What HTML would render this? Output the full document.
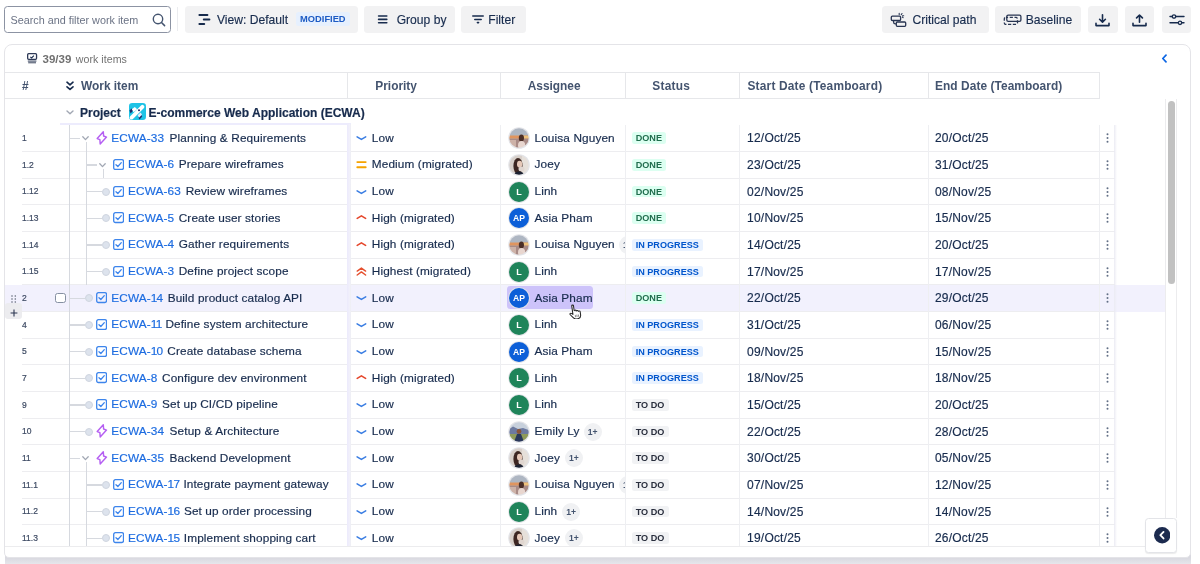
<!DOCTYPE html>
<html><head><meta charset="utf-8"><style>
*{box-sizing:border-box}
html,body{margin:0;padding:0}
body{width:1200px;height:564px;overflow:hidden;background:#fff;position:relative;font-family:"Liberation Sans",sans-serif;color:#172b4d}
.a{position:absolute}
.btn{position:absolute;top:6px;height:26.6px;background:#f2f2f3;border-radius:3.5px}
.btn .t{position:absolute;top:0.9px;line-height:26.6px;font-size:12.1px;color:#172b4d;white-space:nowrap;-webkit-text-stroke:0.15px currentColor}
.hd{position:absolute;top:73.0px;height:26px;line-height:26px;font-size:11.9px;font-weight:bold;color:#44546f;white-space:nowrap}
.vl{position:absolute;width:1px;background:#e6e7ea}
.hl{position:absolute;height:1px;background:#ededf0}
.row{position:absolute;left:0;width:1200px;height:26.667px}
.t12{position:absolute;font-size:11.8px;line-height:14px;white-space:nowrap;letter-spacing:0.12px;-webkit-text-stroke:0.18px currentColor}
.num{position:absolute;left:22px;font-size:8.5px;color:#3d4a63;line-height:10px;-webkit-text-stroke:0.2px currentColor}
.id{color:#1d6ce0}
.ic{position:absolute;display:block}
.av{position:absolute;width:21px;height:21px;border-radius:50%;border:1.5px solid #e2e3e7;color:#fff;font-weight:bold;font-size:8px;text-align:center;line-height:18px;overflow:hidden}
.loz{position:absolute;left:632px;height:11.6px;line-height:13.3px;padding:0 4.3px 0 3.7px;border-radius:2.5px;font-size:9.1px;font-weight:bold;white-space:nowrap}
.done{background:#dcfff1;color:#216e4e}
.inp{background:#e9f2ff;color:#0055cc}
.todo{background:#f1f2f4;color:#292e3d}
.dots{position:absolute;left:1106px;width:2px}
.dots i{display:block;width:2.2px;height:2.2px;border-radius:50%;background:#6b6e76;margin-bottom:1.8px}
.badge{position:absolute;width:18px;height:18px;border-radius:50%;background:#f0f1f3;font-size:8.6px;font-weight:bold;color:#44546f;text-align:center;line-height:18px}
.tv{position:absolute;width:1.1px;background:#d6d9df}
.th{position:absolute;height:1.1px;background:#d6d9df}
.dot{position:absolute;width:8.2px;height:8.2px;border-radius:50%;background:#dde3ed;border:0.8px solid #cfd5df}
.chev{position:absolute}
</style></head><body><div style="position:absolute;left:0;top:0;width:1200px;height:564px;overflow:hidden;will-change:transform">


<div class="a" style="left:4.2px;top:6px;width:167px;height:26.6px;border:1px solid #8c93a3;border-radius:3.5px"></div>
<div class="a" style="left:10.5px;top:6.5px;line-height:26.6px;font-size:10.8px;color:#6b7385;white-space:nowrap">Search and filter work item</div>
<svg class="a" style="left:151.5px;top:12.5px" width="14" height="14" viewBox="0 0 14 14"><circle cx="6" cy="6" r="4.7" fill="none" stroke="#44546f" stroke-width="1.4"/><path d="M9.5 9.5 L12.6 12.6" stroke="#44546f" stroke-width="1.5" stroke-linecap="round"/></svg>
<div class="a" style="left:177px;top:7px;width:1px;height:24px;background:#ebecef"></div>

<div class="btn" style="left:185px;width:173px">
  <svg class="a" style="left:11.5px;top:7.8px" width="14" height="12" viewBox="0 0 14 12"><path d="M2.4 1 H10.4 M6.8 5.6 H12.4 M2.4 10.1 H7.2" stroke="#172b4d" stroke-width="2" stroke-linecap="round"/></svg>
  <div class="t" style="left:32px">View: Default</div>
  <div class="a" style="left:111px;top:6px;height:14px;width:53.7px;background:#e6f0fe;border-radius:2.5px;font-size:9.3px;font-weight:bold;color:#1d5bc4;line-height:14.2px;text-align:center">MODIFIED</div>
</div>
<div class="btn" style="left:364px;width:90.7px">
  <svg class="a" style="left:13px;top:8px" width="12" height="11" viewBox="0 0 12 11"><path d="M1.6 2 H9.8 M1.6 5.4 H9.8 M1.6 8.7 H9.8" stroke="#172b4d" stroke-width="1.6" stroke-linecap="round"/></svg>
  <div class="t" style="left:32.7px">Group by</div>
</div>
<div class="btn" style="left:461.3px;width:64.5px">
  <svg class="a" style="left:10.8px;top:9px" width="12" height="10" viewBox="0 0 12 10"><path d="M0.8 1 H11.2 M2.8 4.4 H9.2 M5.4 7.6 H6.6" stroke="#172b4d" stroke-width="1.55" stroke-linecap="round"/></svg>
  <div class="t" style="left:27px">Filter</div>
</div>

<div class="btn" style="left:882px;width:106.7px">
  <svg class="a" style="left:8px;top:6px" width="17" height="16" viewBox="0 0 17 16"><rect x="1.3" y="4.2" width="9.3" height="4.3" rx="1" fill="none" stroke="#283552" stroke-width="1.3"/><rect x="6.3" y="10" width="9.4" height="4.3" rx="1" fill="none" stroke="#283552" stroke-width="1.3"/><path d="M3.6 8.6 V10 Q3.6 11.9 5.6 11.9 H6.3" fill="none" stroke="#283552" stroke-width="1.2"/><path d="M9.2 1.4 V2.6 M12 1.5 L11.2 2.7 M13.7 3.7 H12.5 M13.1 5.7 L12.3 5" stroke="#283552" stroke-width="1.1" stroke-linecap="round"/></svg>
  <div class="t" style="left:30.5px">Critical path</div>
</div>
<div class="btn" style="left:995.2px;width:85.6px">
  <svg class="a" style="left:7.8px;top:7px" width="20" height="13" viewBox="0 0 20 13"><rect x="3.8" y="2.2" width="14.1" height="6.25" rx="1.4" fill="none" stroke="#283552" stroke-width="1.3"/><rect x="1.3" y="4.4" width="13.2" height="7" rx="1.6" fill="none" stroke="#283552" stroke-width="1.3" stroke-dasharray="3.2 1.6" stroke-dashoffset="1"/></svg>
  <div class="t" style="left:30.6px">Baseline</div>
</div>
<div class="btn" style="left:1088.2px;width:29.5px">
  <svg class="a" style="left:7.3px;top:8.4px" width="15" height="13" viewBox="0 0 15 13"><path d="M7.5 0.8 V8 M4.6 5.3 L7.5 8.2 L10.4 5.3" fill="none" stroke="#172b4d" stroke-width="1.6" stroke-linecap="round" stroke-linejoin="round"/><path d="M1 9.2 V11.6 H14 V9.2" fill="none" stroke="#172b4d" stroke-width="1.6" stroke-linecap="round" stroke-linejoin="round"/></svg>
</div>
<div class="btn" style="left:1125.3px;width:29.2px">
  <svg class="a" style="left:7.1px;top:8.2px" width="15" height="13" viewBox="0 0 15 13"><path d="M7.5 8.2 V1 M4.6 3.9 L7.5 1 L10.4 3.9" fill="none" stroke="#172b4d" stroke-width="1.6" stroke-linecap="round" stroke-linejoin="round"/><path d="M1 9.2 V11.6 H14 V9.2" fill="none" stroke="#172b4d" stroke-width="1.6" stroke-linecap="round" stroke-linejoin="round"/></svg>
</div>
<div class="btn" style="left:1162px;width:28.8px">
  <svg class="a" style="left:6.5px;top:7.5px" width="16" height="12" viewBox="0 0 16 12"><path d="M1 2.5 H3.3 M6.7 2.5 H15 M1 8.8 H9.3 M12.7 8.8 H15" stroke="#172b4d" stroke-width="1.4" stroke-linecap="round"/><circle cx="5" cy="2.5" r="1.7" fill="none" stroke="#172b4d" stroke-width="1.3"/><circle cx="11" cy="8.8" r="1.7" fill="none" stroke="#172b4d" stroke-width="1.3"/></svg>
</div>


<div class="a" style="left:5px;top:552px;width:1186px;height:12px;background:linear-gradient(#d6d6de 0,#d9d9e0 6px,#e6e6eb 12px)"></div>
<div class="a" style="left:4.3px;top:44.2px;width:1187px;height:514px;border:1px solid #e4e4e8;border-radius:8px 8px 5px 5px;background:#fff"></div>
<svg class="a" style="left:27px;top:53.3px" width="11" height="11" viewBox="0 0 11 11"><rect x="0.65" y="0.65" width="8.9" height="5.7" rx="1" fill="#fff" stroke="#2e3a57" stroke-width="1.3"/><path d="M3.3 3.9 L4.6 4.9 L6.9 2.6" fill="none" stroke="#172b4d" stroke-width="1.1"/><rect x="0.8" y="7.5" width="8.6" height="1.2" fill="#4f5a73"/><rect x="1.2" y="9" width="7.8" height="1.4" fill="#737b8c"/></svg>
<div class="a" style="left:42.5px;top:52px;line-height:14px;font-size:11.5px;white-space:nowrap;color:#707070"><b>39/39</b> <span style="font-size:10.6px;margin-left:1.3px;letter-spacing:0.05px">work items</span></div>
<svg class="a" style="left:1161px;top:54px" width="7" height="9" viewBox="0 0 7 9"><path d="M5 1.2 L1.8 4.5 L5 7.8" fill="none" stroke="#0c66e4" stroke-width="1.7" stroke-linecap="round" stroke-linejoin="round"/></svg>

<div class="hl" style="left:5px;top:72px;width:1095px;background:#e6e7ea"></div>
<div class="hl" style="left:5px;top:97.7px;width:1095px;background:#e6e7ea"></div>
<div class="vl" style="left:347.3px;top:72px;height:26px"></div>
<div class="vl" style="left:500.3px;top:72px;height:26px"></div>
<div class="vl" style="left:624.6px;top:72px;height:26px"></div>
<div class="vl" style="left:739.4px;top:72px;height:26px"></div>
<div class="vl" style="left:927.5px;top:72px;height:26px"></div>
<div class="vl" style="left:1099.3px;top:72px;height:26px"></div>
<div class="hd" style="left:22px">#</div>
<svg class="a" style="left:66px;top:80.5px" width="8" height="10" viewBox="0 0 8 10"><path d="M1 1.2 L4 3.8 L7 1.2 M1 5.8 L4 8.4 L7 5.8" fill="none" stroke="#172b4d" stroke-width="1.6" stroke-linecap="round" stroke-linejoin="round"/></svg>
<div class="hd" style="left:81px">Work item</div>
<div class="hd" style="left:375.3px">Priority</div>
<div class="hd" style="left:527.7px">Assignee</div>
<div class="hd" style="left:652.3px;letter-spacing:0.25px">Status</div>
<div class="hd" style="left:747.5px;letter-spacing:0.19px">Start Date (Teamboard)</div>
<div class="hd" style="left:935px;letter-spacing:0.07px">End Date (Teamboard)</div>
<div class="a" style="left:1165px;top:98.5px;width:1px;height:419px;background:#ececee"></div>
<div class="a" style="left:1176px;top:98.5px;width:1px;height:419px;background:#ececee"></div>
<div class="a" style="left:1167.7px;top:100.8px;width:7px;height:183px;border-radius:3.5px;background:#c1c1c1"></div>
<svg class="a" style="left:66px;top:109.8px" width="8" height="5" viewBox="0 0 8 5"><path d="M1 1 L4 3.8 L7 1" fill="none" stroke="#a1a7b3" stroke-width="1.4" stroke-linecap="round" stroke-linejoin="round"/></svg>
<div class="t12" style="left:80px;top:105.89999999999999px;font-weight:bold;font-size:12px;letter-spacing:0">Project</div>
<svg class="a" style="left:128.8px;top:103.0px" width="17" height="17" viewBox="0 0 17 17"><defs><clipPath id="pc"><rect width="17" height="17" rx="3.2"/></clipPath></defs><g clip-path="url(#pc)"><rect width="17" height="17" fill="#1ec3e6"/><path d="M0.5 7.5 L2.6 5.6 L4.2 7.6 L1.6 10.4Z" fill="#1d2a6a"/><path d="M2.8 6.2 L5.8 4 L8.2 6.2 L4.6 9.2Z" fill="#fff"/><path d="M9.5 14.8 L12.2 12 L13.2 13.6 L10.6 16.4Z" fill="#1d2a6a"/><path d="M8.6 12.2 L11.6 9.4 L13 11.6 L10.2 14.6Z" fill="#e6e8fb"/><path d="M2.6 14.6 L13.4 3.8" stroke="#fff" stroke-width="3.8" stroke-linecap="round"/><circle cx="10" cy="7.2" r="1" fill="#1d2a6a"/></g></svg>
<div class="t12" style="left:148.6px;top:105.89999999999999px;font-weight:bold;font-size:12px;letter-spacing:0">E-commerce Web Application (ECWA)</div>
<div class="a" style="left:60px;top:122.69999999999999px;width:290.5px;height:2px;background:#edecfd"></div>
<div class="a" style="left:5px;top:285.469px;width:1160px;height:26.7px;background:#f2f1fd"></div>
<div class="hl" style="left:22px;top:151.03px;width:1093px"></div>
<div class="hl" style="left:22px;top:177.70px;width:1093px"></div>
<div class="hl" style="left:22px;top:204.37px;width:1093px"></div>
<div class="hl" style="left:22px;top:231.04px;width:1093px"></div>
<div class="hl" style="left:22px;top:257.70px;width:1093px"></div>
<div class="hl" style="left:22px;top:284.37px;width:1093px"></div>
<div class="hl" style="left:22px;top:311.04px;width:1093px"></div>
<div class="hl" style="left:22px;top:337.70px;width:1093px"></div>
<div class="hl" style="left:22px;top:364.37px;width:1093px"></div>
<div class="hl" style="left:22px;top:391.04px;width:1093px"></div>
<div class="hl" style="left:22px;top:417.70px;width:1093px"></div>
<div class="hl" style="left:22px;top:444.37px;width:1093px"></div>
<div class="hl" style="left:22px;top:471.04px;width:1093px"></div>
<div class="hl" style="left:22px;top:497.71px;width:1093px"></div>
<div class="hl" style="left:22px;top:524.37px;width:1093px"></div>
<div class="vl" style="left:500.3px;top:124.967px;height:420.6px;background:#eeeff2"></div>
<div class="vl" style="left:624.6px;top:124.967px;height:420.6px;background:#eeeff2"></div>
<div class="vl" style="left:739.4px;top:124.967px;height:420.6px;background:#eeeff2"></div>
<div class="vl" style="left:927.5px;top:124.967px;height:420.6px;background:#eeeff2"></div>
<div class="vl" style="left:1099.3px;top:124.967px;height:420.6px;background:#eeeff2"></div>
<div class="a" style="left:347px;top:123.967px;width:3.6px;height:421.6px;background:linear-gradient(to right,#eceafc,#f1f0fb 60%,#eeeff3)"></div>
<div class="a" style="left:1114.3px;top:124.967px;width:3px;height:420.6px;background:linear-gradient(to right,#ebebf3,rgba(240,240,248,0))"></div>
<div class="tv" style="left:69.1px;top:124.967px;height:420.6px"></div>
<div class="tv" style="left:85.9px;top:142.30px;height:142.67px"></div>
<div class="tv" style="left:102.8px;top:168.97px;height:9.33px"></div>
<div class="tv" style="left:85.9px;top:462.30px;height:83.30px"></div>
<div class="a" style="left:0;top:0;width:1200px;height:545.6px;overflow:hidden">
<div class="num" style="top:133.00px">1</div>
<div class="th" style="left:69.1px;top:137.80px;width:10.8px"></div>
<svg class="a" style="left:82.1px;top:136.10px" width="7" height="5" viewBox="0 0 7 5"><path d="M0.8 0.8 L3.5 3.6 L6.2 0.8" fill="none" stroke="#a1a7b3" stroke-width="1.3" stroke-linecap="round" stroke-linejoin="round"/></svg>
<svg class="ic" style="left:95.10px;top:130.00px" width="14" height="16" viewBox="0 0 14 16"><path d="M8.3 1.8 L8.6 6 L11.5 7.1 L5.2 13.9 L4.9 9.7 L2.2 8.6 Z" fill="none" stroke="#b55ff2" stroke-width="1.45" stroke-linejoin="round"/></svg>
<div class="t12 id" style="left:111.30px;top:130.70px">ECWA-33</div>
<div class="t12" style="left:169.60px;top:130.70px">Planning &amp; Requirements</div>
<svg class="a" style="left:356px;top:133.30px" width="11" height="10" viewBox="0 0 11 10"><path d="M1.1 3.8 L5.4 6.4 L9.7 3.8" fill="none" stroke="#3b7ee3" stroke-width="1.55" stroke-linecap="round" stroke-linejoin="round"/></svg>
<div class="t12" style="left:371.8px;top:130.70px">Low</div>
<svg class="a" style="left:508px;top:127.30px;" width="22" height="22" viewBox="0 0 22 22"><circle cx="11" cy="11" r="10.8" fill="#e3e4e8"/><defs><clipPath id="clouisa0"><circle cx="11" cy="11" r="9.7"/></clipPath><filter id="fclouisa0" x="-10%" y="-10%" width="120%" height="120%"><feGaussianBlur stdDeviation="0.55"/></filter></defs><g clip-path="url(#clouisa0)"><g filter="url(#fclouisa0)"><rect width="22" height="22" fill="#aeb6c2"/><rect y="8.5" width="22" height="3.2" fill="#e0955e"/><rect x="15" y="8.8" width="6" height="2.6" fill="#eec27a"/><rect y="11.7" width="22" height="11" fill="#a98b86"/><rect x="1" y="13" width="7" height="9" fill="#cdb2a8"/><ellipse cx="13.4" cy="11" rx="2.6" ry="3.6" fill="#4b2f25"/><ellipse cx="13.6" cy="18.5" rx="3.6" ry="4.5" fill="#e8d6cf"/></g></g></svg>
<div class="t12" style="left:534.5px;top:130.70px">Louisa Nguyen</div>
<span style="top:132.40px" class="loz done">DONE</span>
<div class="t12" style="left:747.1px;top:131.20px;font-size:12px;letter-spacing:0.2px">12/Oct/25</div>
<div class="t12" style="left:934.9px;top:131.20px;font-size:12px;letter-spacing:0.2px">20/Oct/25</div>
<svg class="a" style="left:1105.5px;top:133.30px" width="3" height="10" viewBox="0 0 3 10"><g fill="#626f86"><circle cx="1.5" cy="1.2" r="1"/><circle cx="1.5" cy="5" r="1"/><circle cx="1.5" cy="8.8" r="1"/></g></svg>
<div class="num" style="top:159.67px">1.2</div>
<div class="th" style="left:85.9px;top:164.47px;width:10.8px"></div>
<svg class="a" style="left:98.9px;top:162.77px" width="7" height="5" viewBox="0 0 7 5"><path d="M0.8 0.8 L3.5 3.6 L6.2 0.8" fill="none" stroke="#a1a7b3" stroke-width="1.3" stroke-linecap="round" stroke-linejoin="round"/></svg>
<svg class="ic" style="left:113.00px;top:159.07px" width="11.2" height="11.2" viewBox="0 0 12 12"><rect x="0.75" y="0.75" width="10.5" height="10.5" rx="1.8" fill="none" stroke="#3d85ec" stroke-width="1.4"/><path d="M3.2 6.1 L5.2 8.1 L8.9 3.9" fill="none" stroke="#3d85ec" stroke-width="1.4" stroke-linecap="round" stroke-linejoin="round"/></svg>
<div class="t12 id" style="left:128.10px;top:157.37px">ECWA-6</div>
<div class="t12" style="left:178.70px;top:157.37px">Prepare wireframes</div>
<svg class="a" style="left:356px;top:159.97px" width="11" height="10" viewBox="0 0 11 10"><path d="M1.3 2.1 H9.7 M1.3 7.2 H9.7" stroke="#f5a300" stroke-width="1.9" stroke-linecap="round"/></svg>
<div class="t12" style="left:371.8px;top:157.37px">Medium (migrated)</div>
<svg class="a" style="left:508px;top:153.97px;" width="22" height="22" viewBox="0 0 22 22"><circle cx="11" cy="11" r="10.8" fill="#e3e4e8"/><defs><clipPath id="cjoey1"><circle cx="11" cy="11" r="9.7"/></clipPath><filter id="fcjoey1" x="-10%" y="-10%" width="120%" height="120%"><feGaussianBlur stdDeviation="0.55"/></filter></defs><g clip-path="url(#cjoey1)"><g filter="url(#fcjoey1)"><rect width="22" height="22" fill="#d8d0ca"/><rect x="14" width="8" height="22" fill="#e6e0da"/><ellipse cx="10" cy="12" rx="4.6" ry="8" fill="#3d2822"/><ellipse cx="11.6" cy="10.2" rx="2.6" ry="3.4" fill="#e6c8b8"/><ellipse cx="13.5" cy="15" rx="3" ry="2.5" fill="#e0d6d0"/><ellipse cx="11" cy="21" rx="5" ry="3.6" fill="#1f2432"/></g></g></svg>
<div class="t12" style="left:534.5px;top:157.37px">Joey</div>
<span style="top:159.07px" class="loz done">DONE</span>
<div class="t12" style="left:747.1px;top:157.87px;font-size:12px;letter-spacing:0.2px">23/Oct/25</div>
<div class="t12" style="left:934.9px;top:157.87px;font-size:12px;letter-spacing:0.2px">31/Oct/25</div>
<svg class="a" style="left:1105.5px;top:159.97px" width="3" height="10" viewBox="0 0 3 10"><g fill="#626f86"><circle cx="1.5" cy="1.2" r="1"/><circle cx="1.5" cy="5" r="1"/><circle cx="1.5" cy="8.8" r="1"/></g></svg>
<div class="num" style="top:186.33px">1.12</div>
<div class="th" style="left:85.9px;top:191.13px;width:16px"></div>
<div class="dot" style="left:101.9px;top:187.63px"></div>
<svg class="ic" style="left:113.00px;top:185.73px" width="11.2" height="11.2" viewBox="0 0 12 12"><rect x="0.75" y="0.75" width="10.5" height="10.5" rx="1.8" fill="none" stroke="#3d85ec" stroke-width="1.4"/><path d="M3.2 6.1 L5.2 8.1 L8.9 3.9" fill="none" stroke="#3d85ec" stroke-width="1.4" stroke-linecap="round" stroke-linejoin="round"/></svg>
<div class="t12 id" style="left:128.10px;top:184.03px">ECWA-63</div>
<div class="t12" style="left:185.70px;top:184.03px">Review wireframes</div>
<svg class="a" style="left:356px;top:186.63px" width="11" height="10" viewBox="0 0 11 10"><path d="M1.1 3.8 L5.4 6.4 L9.7 3.8" fill="none" stroke="#3b7ee3" stroke-width="1.55" stroke-linecap="round" stroke-linejoin="round"/></svg>
<div class="t12" style="left:371.8px;top:184.03px">Low</div>
<svg class="a" style="left:508px;top:180.63px;" width="22" height="22" viewBox="0 0 22 22"><circle cx="11" cy="11" r="10.8" fill="#e3e4e8"/><circle cx="11" cy="11" r="10" fill="#1f845a"/><text x="11" y="14.2" text-anchor="middle" font-family="Liberation Sans" font-weight="bold" font-size="9" fill="#fff">L</text></svg>
<div class="t12" style="left:534.5px;top:184.03px">Linh</div>
<span style="top:185.73px" class="loz done">DONE</span>
<div class="t12" style="left:747.1px;top:184.53px;font-size:12px;letter-spacing:0.2px">02/Nov/25</div>
<div class="t12" style="left:934.9px;top:184.53px;font-size:12px;letter-spacing:0.2px">08/Nov/25</div>
<svg class="a" style="left:1105.5px;top:186.63px" width="3" height="10" viewBox="0 0 3 10"><g fill="#626f86"><circle cx="1.5" cy="1.2" r="1"/><circle cx="1.5" cy="5" r="1"/><circle cx="1.5" cy="8.8" r="1"/></g></svg>
<div class="num" style="top:213.00px">1.13</div>
<div class="th" style="left:85.9px;top:217.80px;width:16px"></div>
<div class="dot" style="left:101.9px;top:214.30px"></div>
<svg class="ic" style="left:113.00px;top:212.40px" width="11.2" height="11.2" viewBox="0 0 12 12"><rect x="0.75" y="0.75" width="10.5" height="10.5" rx="1.8" fill="none" stroke="#3d85ec" stroke-width="1.4"/><path d="M3.2 6.1 L5.2 8.1 L8.9 3.9" fill="none" stroke="#3d85ec" stroke-width="1.4" stroke-linecap="round" stroke-linejoin="round"/></svg>
<div class="t12 id" style="left:128.10px;top:210.70px">ECWA-5</div>
<div class="t12" style="left:178.70px;top:210.70px">Create user stories</div>
<svg class="a" style="left:356px;top:213.30px" width="11" height="10" viewBox="0 0 11 10"><path d="M1.2 5.35 L5.4 2.9 L9.6 5.35" fill="none" stroke="#e5462b" stroke-width="1.6" stroke-linecap="round" stroke-linejoin="round"/></svg>
<div class="t12" style="left:371.8px;top:210.70px">High (migrated)</div>
<svg class="a" style="left:508px;top:207.30px;" width="22" height="22" viewBox="0 0 22 22"><circle cx="11" cy="11" r="10.8" fill="#e3e4e8"/><circle cx="11" cy="11" r="10" fill="#0c5fd8"/><text x="11" y="14.2" text-anchor="middle" font-family="Liberation Sans" font-weight="bold" font-size="8.6" fill="#fff">AP</text></svg>
<div class="t12" style="left:534.5px;top:210.70px">Asia Pham</div>
<span style="top:212.40px" class="loz done">DONE</span>
<div class="t12" style="left:747.1px;top:211.20px;font-size:12px;letter-spacing:0.2px">10/Nov/25</div>
<div class="t12" style="left:934.9px;top:211.20px;font-size:12px;letter-spacing:0.2px">15/Nov/25</div>
<svg class="a" style="left:1105.5px;top:213.30px" width="3" height="10" viewBox="0 0 3 10"><g fill="#626f86"><circle cx="1.5" cy="1.2" r="1"/><circle cx="1.5" cy="5" r="1"/><circle cx="1.5" cy="8.8" r="1"/></g></svg>
<div class="num" style="top:239.67px">1.14</div>
<div class="th" style="left:85.9px;top:244.47px;width:16px"></div>
<div class="dot" style="left:101.9px;top:240.97px"></div>
<svg class="ic" style="left:113.00px;top:239.07px" width="11.2" height="11.2" viewBox="0 0 12 12"><rect x="0.75" y="0.75" width="10.5" height="10.5" rx="1.8" fill="none" stroke="#3d85ec" stroke-width="1.4"/><path d="M3.2 6.1 L5.2 8.1 L8.9 3.9" fill="none" stroke="#3d85ec" stroke-width="1.4" stroke-linecap="round" stroke-linejoin="round"/></svg>
<div class="t12 id" style="left:128.10px;top:237.37px">ECWA-4</div>
<div class="t12" style="left:178.70px;top:237.37px">Gather requirements</div>
<svg class="a" style="left:356px;top:239.97px" width="11" height="10" viewBox="0 0 11 10"><path d="M1.2 5.35 L5.4 2.9 L9.6 5.35" fill="none" stroke="#e5462b" stroke-width="1.6" stroke-linecap="round" stroke-linejoin="round"/></svg>
<div class="t12" style="left:371.8px;top:237.37px">High (migrated)</div>
<svg class="a" style="left:508px;top:233.97px;" width="22" height="22" viewBox="0 0 22 22"><circle cx="11" cy="11" r="10.8" fill="#e3e4e8"/><defs><clipPath id="clouisa2"><circle cx="11" cy="11" r="9.7"/></clipPath><filter id="fclouisa2" x="-10%" y="-10%" width="120%" height="120%"><feGaussianBlur stdDeviation="0.55"/></filter></defs><g clip-path="url(#clouisa2)"><g filter="url(#fclouisa2)"><rect width="22" height="22" fill="#aeb6c2"/><rect y="8.5" width="22" height="3.2" fill="#e0955e"/><rect x="15" y="8.8" width="6" height="2.6" fill="#eec27a"/><rect y="11.7" width="22" height="11" fill="#a98b86"/><rect x="1" y="13" width="7" height="9" fill="#cdb2a8"/><ellipse cx="13.4" cy="11" rx="2.6" ry="3.6" fill="#4b2f25"/><ellipse cx="13.6" cy="18.5" rx="3.6" ry="4.5" fill="#e8d6cf"/></g></g></svg>
<div class="t12" style="left:534.5px;top:237.37px">Louisa Nguyen</div>
<div class="a" style="left:619px;top:235.97px;width:5.5px;height:18px;overflow:hidden"><div class="badge" style="left:0;top:0">1+</div></div>
<span style="top:239.07px" class="loz inp">IN PROGRESS</span>
<div class="t12" style="left:747.1px;top:237.87px;font-size:12px;letter-spacing:0.2px">14/Oct/25</div>
<div class="t12" style="left:934.9px;top:237.87px;font-size:12px;letter-spacing:0.2px">20/Oct/25</div>
<svg class="a" style="left:1105.5px;top:239.97px" width="3" height="10" viewBox="0 0 3 10"><g fill="#626f86"><circle cx="1.5" cy="1.2" r="1"/><circle cx="1.5" cy="5" r="1"/><circle cx="1.5" cy="8.8" r="1"/></g></svg>
<div class="num" style="top:266.34px">1.15</div>
<div class="th" style="left:85.9px;top:271.14px;width:16px"></div>
<div class="dot" style="left:101.9px;top:267.64px"></div>
<svg class="ic" style="left:113.00px;top:265.74px" width="11.2" height="11.2" viewBox="0 0 12 12"><rect x="0.75" y="0.75" width="10.5" height="10.5" rx="1.8" fill="none" stroke="#3d85ec" stroke-width="1.4"/><path d="M3.2 6.1 L5.2 8.1 L8.9 3.9" fill="none" stroke="#3d85ec" stroke-width="1.4" stroke-linecap="round" stroke-linejoin="round"/></svg>
<div class="t12 id" style="left:128.10px;top:264.04px">ECWA-3</div>
<div class="t12" style="left:178.70px;top:264.04px">Define project scope</div>
<svg class="a" style="left:356px;top:266.64px" width="11" height="10" viewBox="0 0 11 10"><path d="M1.2 4.1 L5.4 1.1 L9.6 4.1 M1.2 8 L5.4 4.9 L9.6 8" fill="none" stroke="#e5502f" stroke-width="1.45" stroke-linecap="round" stroke-linejoin="round"/></svg>
<div class="t12" style="left:371.8px;top:264.04px">Highest (migrated)</div>
<svg class="a" style="left:508px;top:260.64px;" width="22" height="22" viewBox="0 0 22 22"><circle cx="11" cy="11" r="10.8" fill="#e3e4e8"/><circle cx="11" cy="11" r="10" fill="#1f845a"/><text x="11" y="14.2" text-anchor="middle" font-family="Liberation Sans" font-weight="bold" font-size="9" fill="#fff">L</text></svg>
<div class="t12" style="left:534.5px;top:264.04px">Linh</div>
<span style="top:265.74px" class="loz inp">IN PROGRESS</span>
<div class="t12" style="left:747.1px;top:264.54px;font-size:12px;letter-spacing:0.2px">17/Nov/25</div>
<div class="t12" style="left:934.9px;top:264.54px;font-size:12px;letter-spacing:0.2px">17/Nov/25</div>
<svg class="a" style="left:1105.5px;top:266.64px" width="3" height="10" viewBox="0 0 3 10"><g fill="#626f86"><circle cx="1.5" cy="1.2" r="1"/><circle cx="1.5" cy="5" r="1"/><circle cx="1.5" cy="8.8" r="1"/></g></svg>
<div class="num" style="top:293.00px">2</div>
<div class="th" style="left:69.1px;top:297.80px;width:16px"></div>
<div class="dot" style="left:85.1px;top:294.30px"></div>
<svg class="ic" style="left:96.20px;top:292.40px" width="11.2" height="11.2" viewBox="0 0 12 12"><rect x="0.75" y="0.75" width="10.5" height="10.5" rx="1.8" fill="none" stroke="#3d85ec" stroke-width="1.4"/><path d="M3.2 6.1 L5.2 8.1 L8.9 3.9" fill="none" stroke="#3d85ec" stroke-width="1.4" stroke-linecap="round" stroke-linejoin="round"/></svg>
<div class="t12 id" style="left:111.30px;top:290.70px">ECWA-<span style="letter-spacing:-0.75px">1</span>4</div>
<div class="t12" style="left:167.70px;top:290.70px">Build product catalog API</div>
<svg class="a" style="left:356px;top:293.30px" width="11" height="10" viewBox="0 0 11 10"><path d="M1.1 3.8 L5.4 6.4 L9.7 3.8" fill="none" stroke="#3b7ee3" stroke-width="1.55" stroke-linecap="round" stroke-linejoin="round"/></svg>
<div class="t12" style="left:371.8px;top:290.70px">Low</div>
<div class="a" style="left:507.2px;top:286.00px;width:86.1px;height:23.2px;border-radius:3.5px;background:#cdc3fa"></div>
<svg class="a" style="left:508px;top:287.30px;" width="22" height="22" viewBox="0 0 22 22"><circle cx="11" cy="11" r="10.8" fill="#e3e4e8"/><circle cx="11" cy="11" r="10" fill="#0c5fd8"/><text x="11" y="14.2" text-anchor="middle" font-family="Liberation Sans" font-weight="bold" font-size="8.6" fill="#fff">AP</text></svg>
<div class="t12" style="left:534.5px;top:290.70px">Asia Pham</div>
<span style="top:292.40px" class="loz done">DONE</span>
<div class="t12" style="left:747.1px;top:291.20px;font-size:12px;letter-spacing:0.2px">22/Oct/25</div>
<div class="t12" style="left:934.9px;top:291.20px;font-size:12px;letter-spacing:0.2px">29/Oct/25</div>
<svg class="a" style="left:1105.5px;top:293.30px" width="3" height="10" viewBox="0 0 3 10"><g fill="#626f86"><circle cx="1.5" cy="1.2" r="1"/><circle cx="1.5" cy="5" r="1"/><circle cx="1.5" cy="8.8" r="1"/></g></svg>
<div class="num" style="top:319.67px">4</div>
<div class="th" style="left:69.1px;top:324.47px;width:16px"></div>
<div class="dot" style="left:85.1px;top:320.97px"></div>
<svg class="ic" style="left:96.20px;top:319.07px" width="11.2" height="11.2" viewBox="0 0 12 12"><rect x="0.75" y="0.75" width="10.5" height="10.5" rx="1.8" fill="none" stroke="#3d85ec" stroke-width="1.4"/><path d="M3.2 6.1 L5.2 8.1 L8.9 3.9" fill="none" stroke="#3d85ec" stroke-width="1.4" stroke-linecap="round" stroke-linejoin="round"/></svg>
<div class="t12 id" style="left:111.30px;top:317.37px">ECWA-<span style="letter-spacing:-0.75px">1</span><span style="letter-spacing:-0.75px">1</span></div>
<div class="t12" style="left:165.40px;top:317.37px">Define system architecture</div>
<svg class="a" style="left:356px;top:319.97px" width="11" height="10" viewBox="0 0 11 10"><path d="M1.1 3.8 L5.4 6.4 L9.7 3.8" fill="none" stroke="#3b7ee3" stroke-width="1.55" stroke-linecap="round" stroke-linejoin="round"/></svg>
<div class="t12" style="left:371.8px;top:317.37px">Low</div>
<svg class="a" style="left:508px;top:313.97px;" width="22" height="22" viewBox="0 0 22 22"><circle cx="11" cy="11" r="10.8" fill="#e3e4e8"/><circle cx="11" cy="11" r="10" fill="#1f845a"/><text x="11" y="14.2" text-anchor="middle" font-family="Liberation Sans" font-weight="bold" font-size="9" fill="#fff">L</text></svg>
<div class="t12" style="left:534.5px;top:317.37px">Linh</div>
<span style="top:319.07px" class="loz inp">IN PROGRESS</span>
<div class="t12" style="left:747.1px;top:317.87px;font-size:12px;letter-spacing:0.2px">31/Oct/25</div>
<div class="t12" style="left:934.9px;top:317.87px;font-size:12px;letter-spacing:0.2px">06/Nov/25</div>
<svg class="a" style="left:1105.5px;top:319.97px" width="3" height="10" viewBox="0 0 3 10"><g fill="#626f86"><circle cx="1.5" cy="1.2" r="1"/><circle cx="1.5" cy="5" r="1"/><circle cx="1.5" cy="8.8" r="1"/></g></svg>
<div class="num" style="top:346.34px">5</div>
<div class="th" style="left:69.1px;top:351.14px;width:16px"></div>
<div class="dot" style="left:85.1px;top:347.64px"></div>
<svg class="ic" style="left:96.20px;top:345.74px" width="11.2" height="11.2" viewBox="0 0 12 12"><rect x="0.75" y="0.75" width="10.5" height="10.5" rx="1.8" fill="none" stroke="#3d85ec" stroke-width="1.4"/><path d="M3.2 6.1 L5.2 8.1 L8.9 3.9" fill="none" stroke="#3d85ec" stroke-width="1.4" stroke-linecap="round" stroke-linejoin="round"/></svg>
<div class="t12 id" style="left:111.30px;top:344.04px">ECWA-<span style="letter-spacing:-0.75px">1</span>0</div>
<div class="t12" style="left:167.30px;top:344.04px">Create database schema</div>
<svg class="a" style="left:356px;top:346.64px" width="11" height="10" viewBox="0 0 11 10"><path d="M1.1 3.8 L5.4 6.4 L9.7 3.8" fill="none" stroke="#3b7ee3" stroke-width="1.55" stroke-linecap="round" stroke-linejoin="round"/></svg>
<div class="t12" style="left:371.8px;top:344.04px">Low</div>
<svg class="a" style="left:508px;top:340.64px;" width="22" height="22" viewBox="0 0 22 22"><circle cx="11" cy="11" r="10.8" fill="#e3e4e8"/><circle cx="11" cy="11" r="10" fill="#0c5fd8"/><text x="11" y="14.2" text-anchor="middle" font-family="Liberation Sans" font-weight="bold" font-size="8.6" fill="#fff">AP</text></svg>
<div class="t12" style="left:534.5px;top:344.04px">Asia Pham</div>
<span style="top:345.74px" class="loz inp">IN PROGRESS</span>
<div class="t12" style="left:747.1px;top:344.54px;font-size:12px;letter-spacing:0.2px">09/Nov/25</div>
<div class="t12" style="left:934.9px;top:344.54px;font-size:12px;letter-spacing:0.2px">15/Nov/25</div>
<svg class="a" style="left:1105.5px;top:346.64px" width="3" height="10" viewBox="0 0 3 10"><g fill="#626f86"><circle cx="1.5" cy="1.2" r="1"/><circle cx="1.5" cy="5" r="1"/><circle cx="1.5" cy="8.8" r="1"/></g></svg>
<div class="num" style="top:373.00px">7</div>
<div class="th" style="left:69.1px;top:377.80px;width:16px"></div>
<div class="dot" style="left:85.1px;top:374.30px"></div>
<svg class="ic" style="left:96.20px;top:372.40px" width="11.2" height="11.2" viewBox="0 0 12 12"><rect x="0.75" y="0.75" width="10.5" height="10.5" rx="1.8" fill="none" stroke="#3d85ec" stroke-width="1.4"/><path d="M3.2 6.1 L5.2 8.1 L8.9 3.9" fill="none" stroke="#3d85ec" stroke-width="1.4" stroke-linecap="round" stroke-linejoin="round"/></svg>
<div class="t12 id" style="left:111.30px;top:370.70px">ECWA-8</div>
<div class="t12" style="left:162.00px;top:370.70px">Configure dev environment</div>
<svg class="a" style="left:356px;top:373.30px" width="11" height="10" viewBox="0 0 11 10"><path d="M1.2 5.35 L5.4 2.9 L9.6 5.35" fill="none" stroke="#e5462b" stroke-width="1.6" stroke-linecap="round" stroke-linejoin="round"/></svg>
<div class="t12" style="left:371.8px;top:370.70px">High (migrated)</div>
<svg class="a" style="left:508px;top:367.30px;" width="22" height="22" viewBox="0 0 22 22"><circle cx="11" cy="11" r="10.8" fill="#e3e4e8"/><circle cx="11" cy="11" r="10" fill="#1f845a"/><text x="11" y="14.2" text-anchor="middle" font-family="Liberation Sans" font-weight="bold" font-size="9" fill="#fff">L</text></svg>
<div class="t12" style="left:534.5px;top:370.70px">Linh</div>
<span style="top:372.40px" class="loz inp">IN PROGRESS</span>
<div class="t12" style="left:747.1px;top:371.20px;font-size:12px;letter-spacing:0.2px">18/Nov/25</div>
<div class="t12" style="left:934.9px;top:371.20px;font-size:12px;letter-spacing:0.2px">18/Nov/25</div>
<svg class="a" style="left:1105.5px;top:373.30px" width="3" height="10" viewBox="0 0 3 10"><g fill="#626f86"><circle cx="1.5" cy="1.2" r="1"/><circle cx="1.5" cy="5" r="1"/><circle cx="1.5" cy="8.8" r="1"/></g></svg>
<div class="num" style="top:399.67px">9</div>
<div class="th" style="left:69.1px;top:404.47px;width:16px"></div>
<div class="dot" style="left:85.1px;top:400.97px"></div>
<svg class="ic" style="left:96.20px;top:399.07px" width="11.2" height="11.2" viewBox="0 0 12 12"><rect x="0.75" y="0.75" width="10.5" height="10.5" rx="1.8" fill="none" stroke="#3d85ec" stroke-width="1.4"/><path d="M3.2 6.1 L5.2 8.1 L8.9 3.9" fill="none" stroke="#3d85ec" stroke-width="1.4" stroke-linecap="round" stroke-linejoin="round"/></svg>
<div class="t12 id" style="left:111.30px;top:397.37px">ECWA-9</div>
<div class="t12" style="left:162.00px;top:397.37px">Set up CI/CD pipeline</div>
<svg class="a" style="left:356px;top:399.97px" width="11" height="10" viewBox="0 0 11 10"><path d="M1.1 3.8 L5.4 6.4 L9.7 3.8" fill="none" stroke="#3b7ee3" stroke-width="1.55" stroke-linecap="round" stroke-linejoin="round"/></svg>
<div class="t12" style="left:371.8px;top:397.37px">Low</div>
<svg class="a" style="left:508px;top:393.97px;" width="22" height="22" viewBox="0 0 22 22"><circle cx="11" cy="11" r="10.8" fill="#e3e4e8"/><circle cx="11" cy="11" r="10" fill="#1f845a"/><text x="11" y="14.2" text-anchor="middle" font-family="Liberation Sans" font-weight="bold" font-size="9" fill="#fff">L</text></svg>
<div class="t12" style="left:534.5px;top:397.37px">Linh</div>
<span style="top:399.07px" class="loz todo">TO DO</span>
<div class="t12" style="left:747.1px;top:397.87px;font-size:12px;letter-spacing:0.2px">15/Oct/25</div>
<div class="t12" style="left:934.9px;top:397.87px;font-size:12px;letter-spacing:0.2px">20/Oct/25</div>
<svg class="a" style="left:1105.5px;top:399.97px" width="3" height="10" viewBox="0 0 3 10"><g fill="#626f86"><circle cx="1.5" cy="1.2" r="1"/><circle cx="1.5" cy="5" r="1"/><circle cx="1.5" cy="8.8" r="1"/></g></svg>
<div class="num" style="top:426.34px">10</div>
<div class="th" style="left:69.1px;top:431.14px;width:16px"></div>
<div class="dot" style="left:85.1px;top:427.64px"></div>
<svg class="ic" style="left:94.60px;top:423.34px" width="14" height="16" viewBox="0 0 14 16"><path d="M8.3 1.8 L8.6 6 L11.5 7.1 L5.2 13.9 L4.9 9.7 L2.2 8.6 Z" fill="none" stroke="#b55ff2" stroke-width="1.45" stroke-linejoin="round"/></svg>
<div class="t12 id" style="left:111.30px;top:424.04px">ECWA-34</div>
<div class="t12" style="left:169.60px;top:424.04px">Setup &amp; Architecture</div>
<svg class="a" style="left:356px;top:426.64px" width="11" height="10" viewBox="0 0 11 10"><path d="M1.1 3.8 L5.4 6.4 L9.7 3.8" fill="none" stroke="#3b7ee3" stroke-width="1.55" stroke-linecap="round" stroke-linejoin="round"/></svg>
<div class="t12" style="left:371.8px;top:424.04px">Low</div>
<svg class="a" style="left:508px;top:420.64px;" width="22" height="22" viewBox="0 0 22 22"><circle cx="11" cy="11" r="10.8" fill="#e3e4e8"/><defs><clipPath id="cemily3"><circle cx="11" cy="11" r="9.7"/></clipPath><filter id="fcemily3" x="-10%" y="-10%" width="120%" height="120%"><feGaussianBlur stdDeviation="0.55"/></filter></defs><g clip-path="url(#cemily3)"><g filter="url(#fcemily3)"><rect width="22" height="22" fill="#c7d0dc"/><path d="M0 9 L5 5.5 L10 8 L15 7 L22 9.5 V22 H0Z" fill="#6d7aa0"/><rect y="13" width="22" height="9" fill="#8e9a5a"/><circle cx="11" cy="10.5" r="2.4" fill="#8a5538"/><path d="M6 21 L9 13 H13 L16 21Z" fill="#2a375a"/></g></g></svg>
<div class="t12" style="left:534.5px;top:424.04px">Emily Ly</div>
<div class="badge" style="left:583.7px;top:422.64px">1+</div>
<span style="top:425.74px" class="loz todo">TO DO</span>
<div class="t12" style="left:747.1px;top:424.54px;font-size:12px;letter-spacing:0.2px">22/Oct/25</div>
<div class="t12" style="left:934.9px;top:424.54px;font-size:12px;letter-spacing:0.2px">28/Oct/25</div>
<svg class="a" style="left:1105.5px;top:426.64px" width="3" height="10" viewBox="0 0 3 10"><g fill="#626f86"><circle cx="1.5" cy="1.2" r="1"/><circle cx="1.5" cy="5" r="1"/><circle cx="1.5" cy="8.8" r="1"/></g></svg>
<div class="num" style="top:453.00px">11</div>
<div class="th" style="left:69.1px;top:457.80px;width:10.8px"></div>
<svg class="a" style="left:82.1px;top:456.10px" width="7" height="5" viewBox="0 0 7 5"><path d="M0.8 0.8 L3.5 3.6 L6.2 0.8" fill="none" stroke="#a1a7b3" stroke-width="1.3" stroke-linecap="round" stroke-linejoin="round"/></svg>
<svg class="ic" style="left:95.10px;top:450.00px" width="14" height="16" viewBox="0 0 14 16"><path d="M8.3 1.8 L8.6 6 L11.5 7.1 L5.2 13.9 L4.9 9.7 L2.2 8.6 Z" fill="none" stroke="#b55ff2" stroke-width="1.45" stroke-linejoin="round"/></svg>
<div class="t12 id" style="left:111.30px;top:450.70px">ECWA-35</div>
<div class="t12" style="left:169.60px;top:450.70px">Backend Development</div>
<svg class="a" style="left:356px;top:453.30px" width="11" height="10" viewBox="0 0 11 10"><path d="M1.1 3.8 L5.4 6.4 L9.7 3.8" fill="none" stroke="#3b7ee3" stroke-width="1.55" stroke-linecap="round" stroke-linejoin="round"/></svg>
<div class="t12" style="left:371.8px;top:450.70px">Low</div>
<svg class="a" style="left:508px;top:447.30px;" width="22" height="22" viewBox="0 0 22 22"><circle cx="11" cy="11" r="10.8" fill="#e3e4e8"/><defs><clipPath id="cjoey4"><circle cx="11" cy="11" r="9.7"/></clipPath><filter id="fcjoey4" x="-10%" y="-10%" width="120%" height="120%"><feGaussianBlur stdDeviation="0.55"/></filter></defs><g clip-path="url(#cjoey4)"><g filter="url(#fcjoey4)"><rect width="22" height="22" fill="#d8d0ca"/><rect x="14" width="8" height="22" fill="#e6e0da"/><ellipse cx="10" cy="12" rx="4.6" ry="8" fill="#3d2822"/><ellipse cx="11.6" cy="10.2" rx="2.6" ry="3.4" fill="#e6c8b8"/><ellipse cx="13.5" cy="15" rx="3" ry="2.5" fill="#e0d6d0"/><ellipse cx="11" cy="21" rx="5" ry="3.6" fill="#1f2432"/></g></g></svg>
<div class="t12" style="left:534.5px;top:450.70px">Joey</div>
<div class="badge" style="left:565px;top:449.30px">1+</div>
<span style="top:452.40px" class="loz todo">TO DO</span>
<div class="t12" style="left:747.1px;top:451.20px;font-size:12px;letter-spacing:0.2px">30/Oct/25</div>
<div class="t12" style="left:934.9px;top:451.20px;font-size:12px;letter-spacing:0.2px">05/Nov/25</div>
<svg class="a" style="left:1105.5px;top:453.30px" width="3" height="10" viewBox="0 0 3 10"><g fill="#626f86"><circle cx="1.5" cy="1.2" r="1"/><circle cx="1.5" cy="5" r="1"/><circle cx="1.5" cy="8.8" r="1"/></g></svg>
<div class="num" style="top:479.67px">11.1</div>
<div class="th" style="left:85.9px;top:484.47px;width:16px"></div>
<div class="dot" style="left:101.9px;top:480.97px"></div>
<svg class="ic" style="left:113.00px;top:479.07px" width="11.2" height="11.2" viewBox="0 0 12 12"><rect x="0.75" y="0.75" width="10.5" height="10.5" rx="1.8" fill="none" stroke="#3d85ec" stroke-width="1.4"/><path d="M3.2 6.1 L5.2 8.1 L8.9 3.9" fill="none" stroke="#3d85ec" stroke-width="1.4" stroke-linecap="round" stroke-linejoin="round"/></svg>
<div class="t12 id" style="left:128.10px;top:477.37px">ECWA-<span style="letter-spacing:-0.75px">1</span>7</div>
<div class="t12" style="left:183.40px;top:477.37px">Integrate payment gateway</div>
<svg class="a" style="left:356px;top:479.97px" width="11" height="10" viewBox="0 0 11 10"><path d="M1.1 3.8 L5.4 6.4 L9.7 3.8" fill="none" stroke="#3b7ee3" stroke-width="1.55" stroke-linecap="round" stroke-linejoin="round"/></svg>
<div class="t12" style="left:371.8px;top:477.37px">Low</div>
<svg class="a" style="left:508px;top:473.97px;" width="22" height="22" viewBox="0 0 22 22"><circle cx="11" cy="11" r="10.8" fill="#e3e4e8"/><defs><clipPath id="clouisa5"><circle cx="11" cy="11" r="9.7"/></clipPath><filter id="fclouisa5" x="-10%" y="-10%" width="120%" height="120%"><feGaussianBlur stdDeviation="0.55"/></filter></defs><g clip-path="url(#clouisa5)"><g filter="url(#fclouisa5)"><rect width="22" height="22" fill="#aeb6c2"/><rect y="8.5" width="22" height="3.2" fill="#e0955e"/><rect x="15" y="8.8" width="6" height="2.6" fill="#eec27a"/><rect y="11.7" width="22" height="11" fill="#a98b86"/><rect x="1" y="13" width="7" height="9" fill="#cdb2a8"/><ellipse cx="13.4" cy="11" rx="2.6" ry="3.6" fill="#4b2f25"/><ellipse cx="13.6" cy="18.5" rx="3.6" ry="4.5" fill="#e8d6cf"/></g></g></svg>
<div class="t12" style="left:534.5px;top:477.37px">Louisa Nguyen</div>
<div class="a" style="left:619px;top:475.97px;width:5.5px;height:18px;overflow:hidden"><div class="badge" style="left:0;top:0">1+</div></div>
<span style="top:479.07px" class="loz todo">TO DO</span>
<div class="t12" style="left:747.1px;top:477.87px;font-size:12px;letter-spacing:0.2px">07/Nov/25</div>
<div class="t12" style="left:934.9px;top:477.87px;font-size:12px;letter-spacing:0.2px">12/Nov/25</div>
<svg class="a" style="left:1105.5px;top:479.97px" width="3" height="10" viewBox="0 0 3 10"><g fill="#626f86"><circle cx="1.5" cy="1.2" r="1"/><circle cx="1.5" cy="5" r="1"/><circle cx="1.5" cy="8.8" r="1"/></g></svg>
<div class="num" style="top:506.34px">11.2</div>
<div class="th" style="left:85.9px;top:511.14px;width:16px"></div>
<div class="dot" style="left:101.9px;top:507.64px"></div>
<svg class="ic" style="left:113.00px;top:505.74px" width="11.2" height="11.2" viewBox="0 0 12 12"><rect x="0.75" y="0.75" width="10.5" height="10.5" rx="1.8" fill="none" stroke="#3d85ec" stroke-width="1.4"/><path d="M3.2 6.1 L5.2 8.1 L8.9 3.9" fill="none" stroke="#3d85ec" stroke-width="1.4" stroke-linecap="round" stroke-linejoin="round"/></svg>
<div class="t12 id" style="left:128.10px;top:504.04px">ECWA-<span style="letter-spacing:-0.75px">1</span>6</div>
<div class="t12" style="left:183.90px;top:504.04px">Set up order processing</div>
<svg class="a" style="left:356px;top:506.64px" width="11" height="10" viewBox="0 0 11 10"><path d="M1.1 3.8 L5.4 6.4 L9.7 3.8" fill="none" stroke="#3b7ee3" stroke-width="1.55" stroke-linecap="round" stroke-linejoin="round"/></svg>
<div class="t12" style="left:371.8px;top:504.04px">Low</div>
<svg class="a" style="left:508px;top:500.64px;" width="22" height="22" viewBox="0 0 22 22"><circle cx="11" cy="11" r="10.8" fill="#e3e4e8"/><circle cx="11" cy="11" r="10" fill="#1f845a"/><text x="11" y="14.2" text-anchor="middle" font-family="Liberation Sans" font-weight="bold" font-size="9" fill="#fff">L</text></svg>
<div class="t12" style="left:534.5px;top:504.04px">Linh</div>
<div class="badge" style="left:562.2px;top:502.64px">1+</div>
<span style="top:505.74px" class="loz todo">TO DO</span>
<div class="t12" style="left:747.1px;top:504.54px;font-size:12px;letter-spacing:0.2px">14/Nov/25</div>
<div class="t12" style="left:934.9px;top:504.54px;font-size:12px;letter-spacing:0.2px">14/Nov/25</div>
<svg class="a" style="left:1105.5px;top:506.64px" width="3" height="10" viewBox="0 0 3 10"><g fill="#626f86"><circle cx="1.5" cy="1.2" r="1"/><circle cx="1.5" cy="5" r="1"/><circle cx="1.5" cy="8.8" r="1"/></g></svg>
<div class="num" style="top:533.01px">11.3</div>
<div class="th" style="left:85.9px;top:537.81px;width:16px"></div>
<div class="dot" style="left:101.9px;top:534.31px"></div>
<svg class="ic" style="left:113.00px;top:532.41px" width="11.2" height="11.2" viewBox="0 0 12 12"><rect x="0.75" y="0.75" width="10.5" height="10.5" rx="1.8" fill="none" stroke="#3d85ec" stroke-width="1.4"/><path d="M3.2 6.1 L5.2 8.1 L8.9 3.9" fill="none" stroke="#3d85ec" stroke-width="1.4" stroke-linecap="round" stroke-linejoin="round"/></svg>
<div class="t12 id" style="left:128.10px;top:530.71px">ECWA-<span style="letter-spacing:-0.75px">1</span>5</div>
<div class="t12" style="left:183.80px;top:530.71px">Implement shopping cart</div>
<svg class="a" style="left:356px;top:533.31px" width="11" height="10" viewBox="0 0 11 10"><path d="M1.1 3.8 L5.4 6.4 L9.7 3.8" fill="none" stroke="#3b7ee3" stroke-width="1.55" stroke-linecap="round" stroke-linejoin="round"/></svg>
<div class="t12" style="left:371.8px;top:530.71px">Low</div>
<svg class="a" style="left:508px;top:527.31px;" width="22" height="22" viewBox="0 0 22 22"><circle cx="11" cy="11" r="10.8" fill="#e3e4e8"/><defs><clipPath id="cjoey6"><circle cx="11" cy="11" r="9.7"/></clipPath><filter id="fcjoey6" x="-10%" y="-10%" width="120%" height="120%"><feGaussianBlur stdDeviation="0.55"/></filter></defs><g clip-path="url(#cjoey6)"><g filter="url(#fcjoey6)"><rect width="22" height="22" fill="#d8d0ca"/><rect x="14" width="8" height="22" fill="#e6e0da"/><ellipse cx="10" cy="12" rx="4.6" ry="8" fill="#3d2822"/><ellipse cx="11.6" cy="10.2" rx="2.6" ry="3.4" fill="#e6c8b8"/><ellipse cx="13.5" cy="15" rx="3" ry="2.5" fill="#e0d6d0"/><ellipse cx="11" cy="21" rx="5" ry="3.6" fill="#1f2432"/></g></g></svg>
<div class="t12" style="left:534.5px;top:530.71px">Joey</div>
<div class="badge" style="left:565px;top:529.31px">1+</div>
<span style="top:532.41px" class="loz todo">TO DO</span>
<div class="t12" style="left:747.1px;top:531.21px;font-size:12px;letter-spacing:0.2px">19/Oct/25</div>
<div class="t12" style="left:934.9px;top:531.21px;font-size:12px;letter-spacing:0.2px">26/Oct/25</div>
<svg class="a" style="left:1105.5px;top:533.31px" width="3" height="10" viewBox="0 0 3 10"><g fill="#626f86"><circle cx="1.5" cy="1.2" r="1"/><circle cx="1.5" cy="5" r="1"/><circle cx="1.5" cy="8.8" r="1"/></g></svg>
</div>
<svg class="a" style="left:10.8px;top:294.969px" width="6" height="8" viewBox="0 0 6 8"><g fill="#5e6675"><circle cx="1" cy="1" r="0.8"/><circle cx="4.3" cy="1" r="0.8"/><circle cx="1" cy="4" r="0.8"/><circle cx="4.3" cy="4" r="0.8"/><circle cx="1" cy="7" r="0.8"/><circle cx="4.3" cy="7" r="0.8"/></g></svg>
<div class="a" style="left:5.4px;top:303.3px;width:16.3px;height:15.7px;border-radius:3px;background:#ececef"></div>
<svg class="a" style="left:9.8px;top:308.6px" width="8" height="8" viewBox="0 0 8 8"><path d="M4 0.6 V7.4 M0.6 4 H7.4" stroke="#2a3550" stroke-width="1.1"/></svg>
<div class="a" style="left:55px;top:292.5px;width:10.8px;height:10.3px;border:1.3px solid #8590a2;border-radius:2.5px;background:#fff"></div>
<svg class="a" style="left:567.6px;top:303.6px" width="15" height="15.5" viewBox="0 0 14 16"><g transform="rotate(-8 7 8)"><path d="M4 1.5 C4 0.5 5.8 0.5 5.8 1.5 V6.8 C6 6.1 7.8 6.1 7.8 7 V7.4 C8 6.7 9.8 6.7 9.8 7.6 V8.1 C10 7.5 11.8 7.5 11.8 8.4 V11.6 C11.8 13.7 10.8 15.4 8.6 15.4 H6.6 C5.3 15.4 4.6 14.8 3.8 13.7 L1.2 10.3 C0.5 9.4 1.6 8.3 2.5 9 L4 10.3 Z" fill="#fff" stroke="#222" stroke-width="1.05" stroke-linejoin="round"/><path d="M6.3 11.2 V13.6 M7.9 11.2 V13.6 M9.5 11.2 V13.6" stroke="#777" stroke-width="0.8"/></g></svg>
<div class="a" style="left:5px;top:545.6px;width:1140px;height:1px;background:#ececee"></div>
<div class="a" style="left:1145px;top:517.6px;width:32.2px;height:35.7px;border:1px solid #e3e4e8;border-radius:3.5px;background:#fff;box-shadow:0 1px 1px rgba(0,0,0,0.08)"></div>
<svg class="a" style="left:1154px;top:527.2px" width="16.4" height="16.4" viewBox="0 0 16 16"><circle cx="8" cy="8" r="8" fill="#1c2b4f"/><path d="M9.3 4.8 L6.2 8 L9.3 11.2" fill="none" stroke="#fff" stroke-width="1.8" stroke-linecap="round" stroke-linejoin="round"/></svg>
</div></body></html>
